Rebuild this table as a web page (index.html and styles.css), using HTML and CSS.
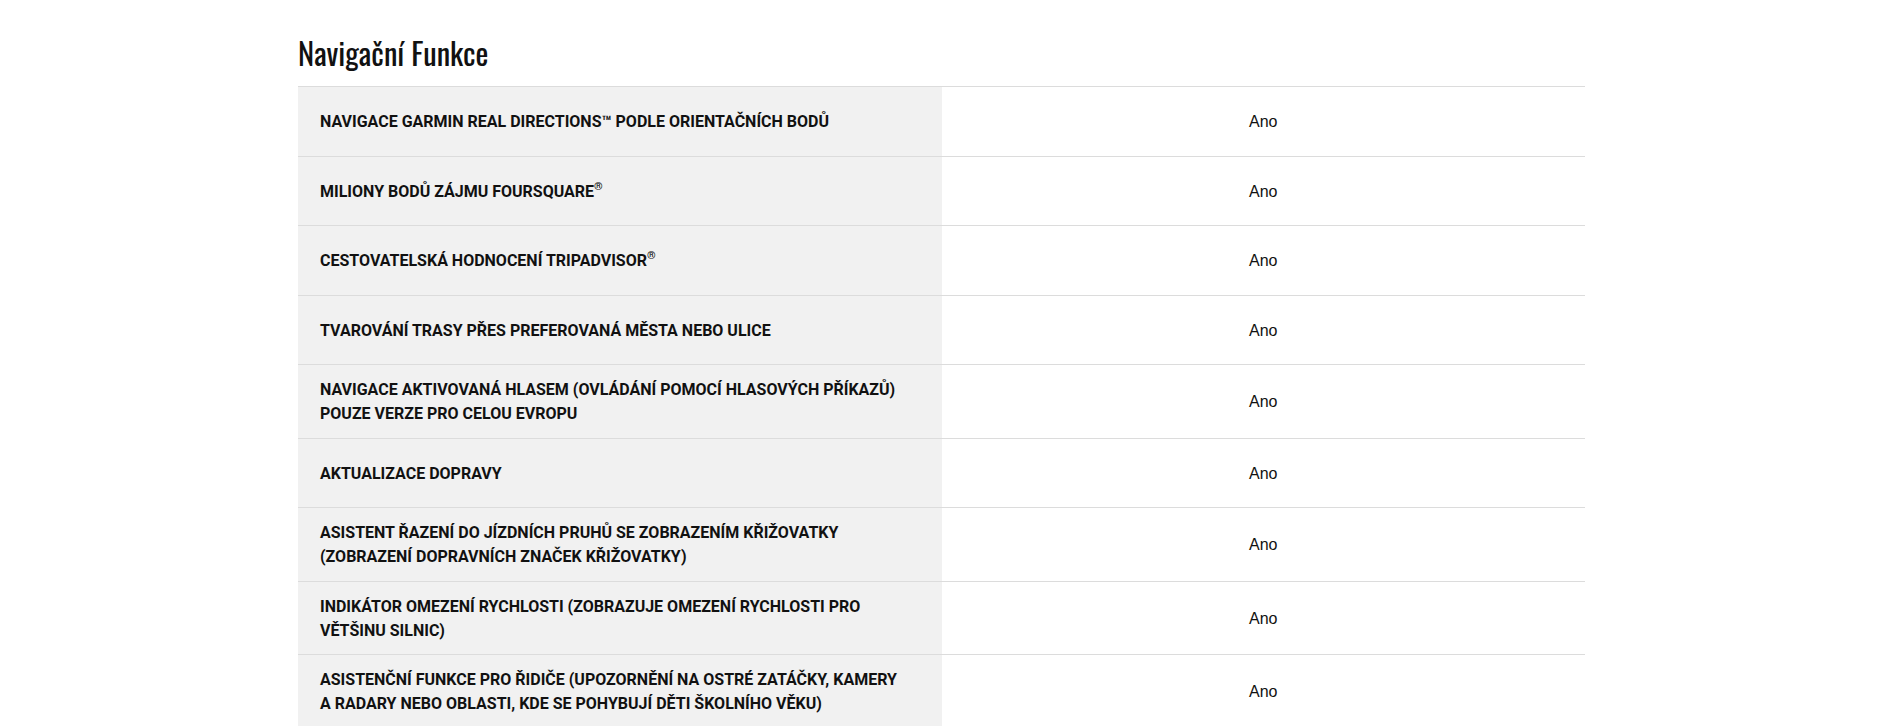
FILE: index.html
```html
<!DOCTYPE html>
<html lang="cs">
<head>
<meta charset="utf-8">
<title>Navigační Funkce</title>
<link rel="stylesheet" href="styles.css">
</head>
<body>
<section class="specs">
  <h2 class="specs-title">Navigační Funkce</h2>
  <div class="spec-table">
    <div class="spec-row"><div class="spec-name">NAVIGACE GARMIN REAL DIRECTIONS™ PODLE ORIENTAČNÍCH BODŮ</div><div class="spec-value">Ano</div></div>
    <div class="spec-row"><div class="spec-name">MILIONY BODŮ ZÁJMU FOURSQUARE<span class="mark">®</span></div><div class="spec-value">Ano</div></div>
    <div class="spec-row"><div class="spec-name">CESTOVATELSKÁ HODNOCENÍ TRIPADVISOR<span class="mark">®</span></div><div class="spec-value">Ano</div></div>
    <div class="spec-row"><div class="spec-name">TVAROVÁNÍ TRASY PŘES PREFEROVANÁ MĚSTA NEBO ULICE</div><div class="spec-value">Ano</div></div>
    <div class="spec-row"><div class="spec-name">NAVIGACE AKTIVOVANÁ HLASEM (OVLÁDÁNÍ POMOCÍ HLASOVÝCH PŘÍKAZŮ) POUZE VERZE PRO CELOU EVROPU</div><div class="spec-value">Ano</div></div>
    <div class="spec-row"><div class="spec-name">AKTUALIZACE DOPRAVY</div><div class="spec-value">Ano</div></div>
    <div class="spec-row"><div class="spec-name">ASISTENT ŘAZENÍ DO JÍZDNÍCH PRUHŮ SE ZOBRAZENÍM KŘIŽOVATKY (ZOBRAZENÍ DOPRAVNÍCH ZNAČEK KŘIŽOVATKY)</div><div class="spec-value">Ano</div></div>
    <div class="spec-row"><div class="spec-name">INDIKÁTOR OMEZENÍ RYCHLOSTI (ZOBRAZUJE OMEZENÍ RYCHLOSTI PRO VĚTŠINU SILNIC)</div><div class="spec-value">Ano</div></div>
    <div class="spec-row"><div class="spec-name">ASISTENČNÍ FUNKCE PRO ŘIDIČE (UPOZORNĚNÍ NA OSTRÉ ZATÁČKY, KAMERY A RADARY NEBO OBLASTI, KDE SE POHYBUJÍ DĚTI ŠKOLNÍHO VĚKU)</div><div class="spec-value">Ano</div></div>
  </div>
</section>
</body>
</html>
```

FILE: styles.css
```css
html, body {
  margin: 0;
  padding: 0;
  background: #ffffff;
}

.specs {
  width: 1287px;
  margin-left: 298px;
  padding-top: 32px;
}

.specs-title {
  margin: 0 0 14px 0;
  font-family: "Oswald", "Liberation Sans Narrow", "DejaVu Sans Condensed", "DejaVu Sans", sans-serif;
  font-stretch: condensed;
  font-weight: 400;
  font-size: 30.6px;
  line-height: 40px;
  color: #111111;
}

.spec-table {
  border-top: 1px solid #dcdcdc;
}

.spec-row {
  display: grid;
  grid-template-columns: 1fr 1fr;
  border-bottom: 1px solid #dcdcdc;
  min-height: 68.5px;
}

.spec-name {
  background: #f1f1f1;
  padding: 13px 36px 11.5px 22px;
  display: flex;
  align-items: center;
  font-family: Roboto, "Liberation Sans", sans-serif;
  font-weight: 700;
  font-size: 16px;
  line-height: 24px;
  color: #111111;
}

.mark {
  font-size: 11px;
  line-height: 0;
  position: relative;
  top: -5px;
}

.spec-value {
  display: flex;
  align-items: center;
  justify-content: center;
  padding-top: 1.5px;
  font-family: "Liberation Sans", Arial, sans-serif;
  font-size: 16px;
  color: #111111;
}
```
